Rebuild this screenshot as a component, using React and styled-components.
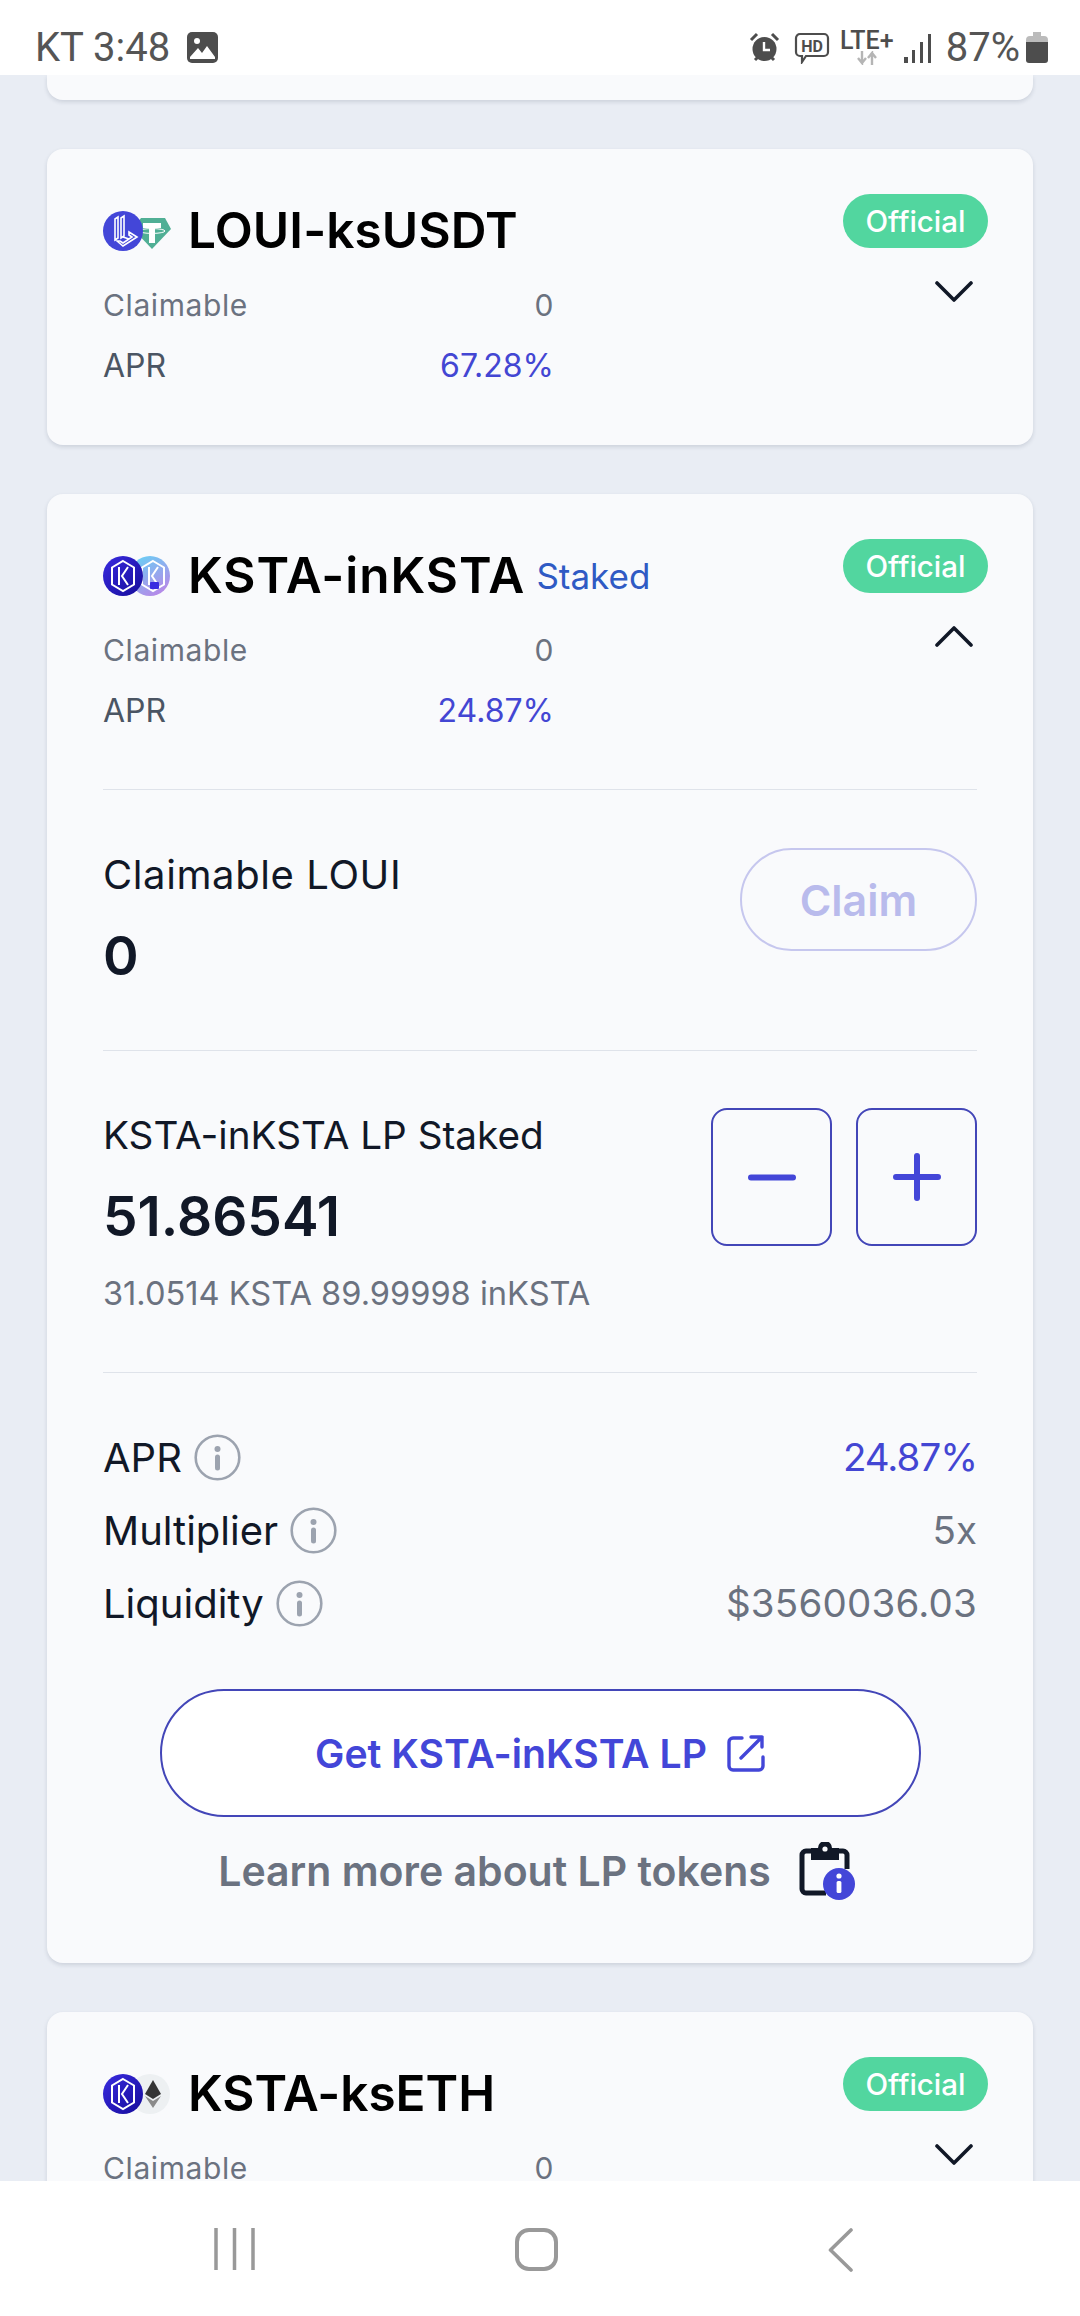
import React from 'react'
import styled, { createGlobalStyle } from 'styled-components'

const Global = createGlobalStyle`
  html, body { margin: 0; padding: 0; background: #e9edf4; }
  * { box-sizing: border-box; }
  body { font-family: Inter, "Liberation Sans", sans-serif; }
  svg { flex: none; }
`

const Phone = styled.div`
  width: 1080px;
  height: 2316px;
  display: flex;
  flex-direction: column;
  overflow: hidden;
  background: #e9edf4;
`

const StatusBar = styled.div`
  flex: 0 0 75px;
  background: #fff;
  display: flex;
  align-items: center;
  justify-content: space-between;
  padding: 20px 32px 0 35px;
  color: #555;
  font-family: Roboto, sans-serif;
  font-size: 40px;
  svg { display: block; }
`

const StatusGroup = styled.div`
  display: flex;
  align-items: center;
  gap: ${p => p.$gap || 14}px;
`

const NetworkBadge = styled.div`
  width: 54px;
  display: flex;
  flex-direction: column;
  align-items: center;
  font-size: 25px;
  font-weight: 500;
  line-height: 20px;
  color: #4d4d4d;
  white-space: nowrap;
`

const Scroll = styled.div`
  flex: 1;
  min-height: 0;
  overflow: hidden;
  display: flex;
  flex-direction: column;
  gap: 49px;
  padding: 0 47px;
`

const Card = styled.section`
  flex: none;
  background: #f9fafc;
  border-radius: 16px;
  box-shadow: 0 2px 4px rgba(30, 40, 70, 0.14);
  padding: 45px 56px 60px;
`

const ClippedCard = styled(Card)`
  height: 25px;
  padding: 0;
  border-radius: 0 0 16px 16px;
`

const Head = styled.div`
  display: flex;
  justify-content: space-between;
`

const HeadInfo = styled.div`
  width: 451px;
  padding-top: 7px;
`

const TitleRow = styled.div`
  display: flex;
  align-items: center;
  height: 60px;
  margin-bottom: 24px;
  white-space: nowrap;
`

const Title = styled.h2`
  margin: -2px 0 0 17px;
  font-size: 49.5px;
  font-weight: 600;
  color: #000;
  line-height: 60px;
  letter-spacing: ${p => p.$spacing || 0}px;
`

const StakedTag = styled.span`
  margin-left: 11px;
  font-size: 35px;
  color: #2f5ac4;
`

const SummaryRow = styled.div`
  display: flex;
  justify-content: space-between;
  align-items: center;
  height: 40px;
  margin-top: ${p => p.$top || 0}px;
  font-size: ${p => p.$size || 32}px;
  letter-spacing: ${p => p.$spacing || 0}px;
  color: ${p => p.$color || '#4b5563'};
`

const BlueText = styled.span`
  color: #4346d3;
`

const HeadSide = styled.div`
  display: flex;
  flex-direction: column;
  align-items: flex-end;
  margin-right: -11px;
`

const Badge = styled.span`
  width: 145px;
  height: 54px;
  border-radius: 27px;
  background: #52d69f;
  color: #fff;
  font-size: 29.5px;
  font-weight: 500;
  display: flex;
  align-items: center;
  justify-content: center;
`

const ChevronWrap = styled.div`
  margin: ${p => (p.$up ? 32 : 33)}px 15px 0 0;
  line-height: 0;
`

const Section = styled.div`
  border-top: 1px solid #dfe3ea;
  margin-top: ${p => p.$top || 0}px;
  padding: ${p => p.$pad};
`

const SplitRow = styled.div`
  display: flex;
  justify-content: space-between;
  align-items: flex-start;
`

const Label = styled.div`
  font-size: ${p => p.$size || 38.7}px;
  letter-spacing: ${p => p.$spacing || 0}px;
  line-height: 54px;
  color: #111827;
`

const Amount = styled.div`
  font-size: ${p => p.$size}px;
  font-weight: 600;
  color: #111827;
  line-height: 64px;
  margin-top: ${p => p.$top}px;
`

const SubAmount = styled.div`
  font-size: 32.6px;
  line-height: 40px;
  color: #6b7280;
  margin-top: 25px;
`

const ClaimButton = styled.button`
  width: 237px;
  height: 103px;
  border: 2px solid #c6c7ee;
  border-radius: 52px;
  background: transparent;
  color: #b9bbec;
  font: 600 43px Inter, sans-serif;
`

const StepGroup = styled.div`
  display: flex;
  gap: 24px;
`

const StepButton = styled.button`
  width: 121px;
  height: 138px;
  border: 2px solid #4346b8;
  border-radius: 16px;
  background: transparent;
  padding: 0;
  display: flex;
  align-items: center;
  justify-content: center;
`

const StatList = styled.div`
  display: flex;
  flex-direction: column;
  gap: 25px;
`

const StatRow = styled.div`
  display: flex;
  justify-content: space-between;
  align-items: center;
  height: 48px;
  font-size: 38.5px;
  letter-spacing: ${p => p.$spacing || 0}px;
  color: ${p => p.$color || '#6b7280'};
`

const StatLabel = styled.div`
  display: flex;
  align-items: center;
  gap: 12px;
  font-size: 40px;
  letter-spacing: 0;
  color: #111827;
`

const GetButton = styled.button`
  display: flex;
  align-items: center;
  justify-content: center;
  gap: 20px;
  width: 761px;
  height: 128px;
  margin: 62px auto 0;
  background: #fff;
  border: 2px solid #4346b8;
  border-radius: 64px;
  color: #4346d8;
  font: 600 39.2px Inter, sans-serif;
`

const LearnRow = styled.div`
  display: flex;
  align-items: center;
  justify-content: center;
  gap: 28px;
  height: 55px;
  margin: 26px 0 5px;
  padding-right: 6px;
  color: #6b7280;
  font-size: 41px;
  font-weight: 600;
`

const NavBar = styled.nav`
  flex: 0 0 135px;
  background: #fff;
  position: relative;
  z-index: 1;
  display: grid;
  grid-template-columns: 214px 41px 260px 43px 270px 25px;
  padding-top: 47px;
  color: #999;
`

const NavSlot = styled.div`
  grid-column: ${p => p.$col};
  line-height: 0;
`

const Chevron = ({ up }) => (
  <svg width="38" height="22" viewBox="0 0 38 22">
    <path d={up ? 'M2 20 19 3l17 17' : 'M2 2l17 17L36 2'} fill="none" stroke="#111827" strokeWidth="3.6" strokeLinecap="round" strokeLinejoin="round" />
  </svg>
)

const KstaMark = ({ cx, color = '#fff' }) => (
  <g fill="none" stroke={color} strokeWidth="2">
    <path d={`M${cx} 6l11 6.500v17L${cx} 36l-11-6.500v-17z`} />
    <path d={`M${cx - 4} 12v18M${cx + 5} 12l-6 9 6 9`} />
  </g>
)

const LouiTether = () => (
  <svg width="68" height="42" viewBox="0 0 68 42">
    <path d="M38 8h24l6 11-19 20-19-20z" fill="#50af95" />
    <path d="M40 13h18v5h-6v15h-6V18h-6z" fill="#fff" />
    <ellipse cx="49" cy="21" rx="13" ry="2.4" fill="none" stroke="#fff" strokeWidth="1" />
    <circle cx="20" cy="21" r="20" fill="#4346d8" />
    <g fill="none" stroke="#fff" strokeWidth="1.6">
      <path d="M12 9l3-2v21l-3 2zM18 8l3-2v20l-3 2z" />
      <path d="M14 31l6 5 14-9-8-5v3l3 2-9 6-3-2zM20 27l6 2" />
    </g>
  </svg>
)

const KstaInksta = () => (
  <svg width="68" height="42" viewBox="0 0 68 42">
    <defs>
      <linearGradient id="kstaBlue" x1="0" y1="0" x2="1" y2="1">
        <stop offset="0" stopColor="#3a2be0" />
        <stop offset="1" stopColor="#150c9a" />
      </linearGradient>
      <linearGradient id="inkstaGrad" x1="0" y1="0" x2="0.6" y2="1">
        <stop offset="0" stopColor="#62d6f6" />
        <stop offset="1" stopColor="#b48be8" />
      </linearGradient>
    </defs>
    <circle cx="47" cy="21" r="20" fill="url(#inkstaGrad)" />
    <KstaMark cx={50} />
    <rect x="47" y="27" width="9" height="7" rx="1" fill="#3a2be0" />
    <circle cx="20" cy="21" r="20" fill="url(#kstaBlue)" />
    <KstaMark cx={20} />
  </svg>
)

const KstaEth = () => (
  <svg width="68" height="42" viewBox="0 0 68 42">
    <defs>
      <linearGradient id="kstaBlue2" x1="0" y1="0" x2="1" y2="1">
        <stop offset="0" stopColor="#3a2be0" />
        <stop offset="1" stopColor="#150c9a" />
      </linearGradient>
    </defs>
    <circle cx="47" cy="21" r="20" fill="#edf0f2" />
    <path d="M50 7l-8 14 8 5 8-5z" fill="#343434" />
    <path d="M50 28l-8-5 8 12 8-12z" fill="#8a8a8a" />
    <circle cx="20" cy="21" r="20" fill="url(#kstaBlue2)" />
    <KstaMark cx={20} />
  </svg>
)

const InfoIcon = () => (
  <svg width="47" height="47" viewBox="0 0 47 47">
    <circle cx="23.5" cy="23.5" r="21.8" fill="none" stroke="#9ca3af" strokeWidth="2.6" />
    <circle cx="23.5" cy="15" r="3" fill="#9ca3af" />
    <path d="M23.5 23v11" stroke="#9ca3af" strokeWidth="5" strokeLinecap="round" />
  </svg>
)

const ExternalIcon = () => (
  <svg width="38" height="38" viewBox="0 0 38 38" fill="none" stroke="#4346d8" strokeWidth="3.4" strokeLinecap="round" strokeLinejoin="round">
    <path d="M15 4H6a4 4 0 0 0-4 4v24a4 4 0 0 0 4 4h26a4 4 0 0 0 4-4v-9" />
    <path d="M14 24 35 3M24 3h11v10" />
  </svg>
)

const ClipboardIcon = () => (
  <svg width="57" height="58" viewBox="0 0 57 58">
    <path d="M14 9H7a4 4 0 0 0-4 4v34a4 4 0 0 0 4 4h20M38 9h6a4 4 0 0 1 4 4v14" fill="none" stroke="#111827" strokeWidth="5" />
    <path d="M12 6h7a7 7 0 0 1 14 0h7v12H12z" fill="#111827" />
    <circle cx="26" cy="7" r="2.6" fill="#f9fafc" />
    <circle cx="40" cy="42" r="16" fill="#4346d8" />
    <circle cx="40" cy="34" r="2.6" fill="#fff" />
    <rect x="37.6" y="39" width="4.8" height="12" rx="1.5" fill="#fff" />
  </svg>
)

const Summary = ({ icon, title, spacing, staked, claimable = '0', apr, up }) => (
  <Head>
    <HeadInfo>
      <TitleRow>
        {icon}
        <Title $spacing={spacing}>{title}</Title>
        {staked && <StakedTag>Staked</StakedTag>}
      </TitleRow>
      <SummaryRow $size={30} $spacing={0.6} $color="#6b7280">
        <span>Claimable</span>
        <span>{claimable}</span>
      </SummaryRow>
      {apr && (
        <SummaryRow $top={20}>
          <span>APR</span>
          <BlueText>{apr}</BlueText>
        </SummaryRow>
      )}
    </HeadInfo>
    <HeadSide>
      <Badge>Official</Badge>
      <ChevronWrap $up={up}><Chevron up={up} /></ChevronWrap>
    </HeadSide>
  </Head>
)

const statRows = [
  { label: 'APR', value: '24.87%', color: '#4346d3', spacing: -1 },
  { label: 'Multiplier', value: '5x' },
  { label: 'Liquidity', value: '$3560036.03', spacing: 0.2 },
]

export default function App() {
  return (
    <Phone>
      <Global />
      <StatusBar>
        <StatusGroup $gap={17}>
          <span>KT 3:48</span>
          <svg width="31" height="31" viewBox="0 0 31 31">
            <rect width="31" height="31" rx="5" fill="#4d4d4d" />
            <circle cx="10" cy="9" r="3" fill="#fff" />
            <path d="M3 25l8-9 4 5 5-7 8 11v2H3z" fill="#fff" />
          </svg>
        </StatusGroup>
        <StatusGroup $gap={10}>
          <StatusGroup>
            <svg width="31" height="31" viewBox="0 0 31 31">
              <circle cx="15.500" cy="17" r="12" fill="#4d4d4d" />
              <path d="M15 10v8h6" fill="none" stroke="#fff" strokeWidth="2.4" />
              <path d="M2 8l6-6M29 8l-6-6M6 28l3-3M25 28l-3-3" stroke="#4d4d4d" strokeWidth="3" />
            </svg>
            <svg width="36" height="32" viewBox="0 0 36 32">
              <path d="M6 2h24a4 4 0 0 1 4 4v14a4 4 0 0 1-4 4H12l-4 6v-6H6a4 4 0 0 1-4-4V6a4 4 0 0 1 4-4z" fill="none" stroke="#4d4d4d" strokeWidth="2.2" />
              <text x="18" y="20" textAnchor="middle" fontFamily="Roboto, sans-serif" fontWeight="700" fontSize="16" fill="#4d4d4d">HD</text>
            </svg>
          </StatusGroup>
          <NetworkBadge>
            <span>LTE+</span>
            <svg width="26" height="14" viewBox="0 0 26 14" fill="none" stroke="#b5b5b5" strokeWidth="2.4">
              <path d="M8 0v12l-4-5m4 5 4-5M18 14V2l-4 5m4-5 4 5" />
            </svg>
          </NetworkBadge>
          <StatusGroup>
            <svg width="28" height="30" viewBox="0 0 28 30">
              <rect x="0" y="24" width="4" height="6" fill="#4d4d4d" />
              <rect x="8" y="17" width="3" height="13" fill="#4d4d4d" />
              <rect x="16" y="9" width="3" height="21" fill="#4d4d4d" />
              <rect x="24" y="1" width="3" height="29" fill="#4d4d4d" />
            </svg>
            <StatusGroup $gap={6}>
              <span>87%</span>
              <svg width="22" height="31" viewBox="0 0 22 31">
                <path d="M7 0h8v4h3a4 4 0 0 1 4 4v2H0V8a4 4 0 0 1 4-4h3z" fill="#bbb" />
                <path d="M0 10h22v18a3 3 0 0 1-3 3H3a3 3 0 0 1-3-3z" fill="#4d4d4d" />
              </svg>
            </StatusGroup>
          </StatusGroup>
        </StatusGroup>
      </StatusBar>

      <Scroll>
        <ClippedCard />

        <Card>
          <Summary icon={<LouiTether />} title="LOUI-ksUSDT" spacing={0.1} apr="67.28%" />
        </Card>

        <Card>
          <Summary icon={<KstaInksta />} title="KSTA-inKSTA" spacing={1} apr="24.87%" staked up />

          <Section $top={59} $pad="58px 0 62px">
            <SplitRow>
              <div>
                <Label $size={40} $spacing={0.6}>Claimable LOUI</Label>
                <Amount $size={54} $top={22}>0</Amount>
              </div>
              <ClaimButton>Claim</ClaimButton>
            </SplitRow>
          </Section>

          <Section $pad="57px 0 59px">
            <SplitRow>
              <div>
                <Label>KSTA-inKSTA LP Staked</Label>
                <Amount $size={55} $top={22}>51.86541</Amount>
                <SubAmount>31.0514 KSTA 89.99998 inKSTA</SubAmount>
              </div>
              <StepGroup>
                <StepButton aria-label="Unstake">
                  <svg width="48" height="7" viewBox="0 0 48 7">
                    <path d="M3 3.5h42" stroke="#4346d8" strokeWidth="6" strokeLinecap="round" />
                  </svg>
                </StepButton>
                <StepButton aria-label="Stake">
                  <svg width="48" height="48" viewBox="0 0 48 48">
                    <path d="M3 24h42M24 3v42" stroke="#4346d8" strokeWidth="6" strokeLinecap="round" />
                  </svg>
                </StepButton>
              </StepGroup>
            </SplitRow>
          </Section>

          <Section $pad="60px 0 0">
            <StatList>
              {statRows.map(r => (
                <StatRow key={r.label} $color={r.color} $spacing={r.spacing}>
                  <StatLabel>{r.label} <InfoIcon /></StatLabel>
                  <span>{r.value}</span>
                </StatRow>
              ))}
            </StatList>
            <GetButton>Get KSTA-inKSTA LP <ExternalIcon /></GetButton>
            <LearnRow>Learn more about LP tokens <ClipboardIcon /></LearnRow>
          </Section>
        </Card>

        <Card>
          <Summary icon={<KstaEth />} title="KSTA-ksETH" />
        </Card>
      </Scroll>

      <NavBar>
        <NavSlot $col={2}>
          <svg width="41" height="42" viewBox="0 0 41 42">
            <path d="M2 0v42M20.500 0v42M39 0v42" stroke="#999" strokeWidth="3.5" />
          </svg>
        </NavSlot>
        <NavSlot $col={4}>
          <svg width="43" height="43" viewBox="0 0 43 43">
            <rect x="2" y="2" width="39" height="39" rx="12" fill="none" stroke="#999" strokeWidth="4" />
          </svg>
        </NavSlot>
        <NavSlot $col={6}>
          <svg width="25" height="44" viewBox="0 0 25 44">
            <path d="M23 2 2.500 22 23 42" fill="none" stroke="#999" strokeWidth="3.6" strokeLinecap="round" strokeLinejoin="round" />
          </svg>
        </NavSlot>
      </NavBar>
    </Phone>
  )
}
